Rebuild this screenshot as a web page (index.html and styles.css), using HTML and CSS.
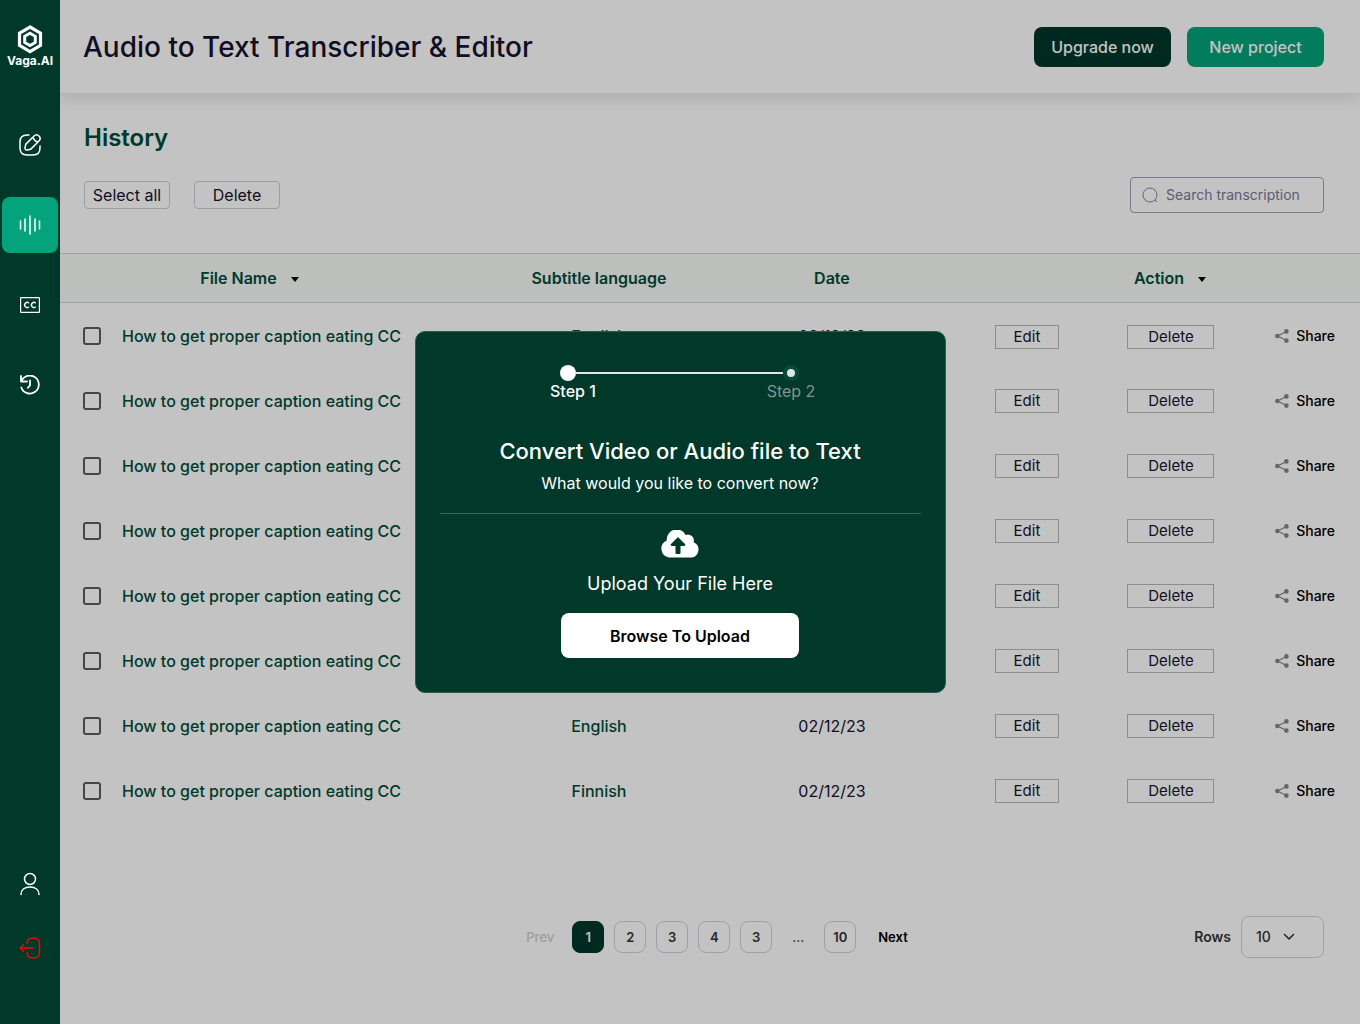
FILE: index.html
```html
<!DOCTYPE html>
<html lang="en">
<head>
<meta charset="utf-8">
<meta name="viewport" content="width=device-width, initial-scale=1">
<title>Vaga.AI – Audio to Text Transcriber &amp; Editor</title>
<link rel="stylesheet" href="styles.css">
</head>
<body>
<svg class="defs" aria-hidden="true">
  <symbol id="share" viewBox="0 0 14 14">
    <path d="M11.5 2.5 2.5 7l9 4.500" fill="none" stroke="currentColor" stroke-width="1.200"/>
    <circle cx="11.400" cy="2.400" r="2.300"/><circle cx="2.300" cy="7" r="2.200"/><circle cx="11.400" cy="11.600" r="2.300"/>
  </symbol>
</svg>
<div class="app">
  <aside class="sidebar">
    <a class="logo" href="#">
      <svg width="26" height="29" viewBox="0 0 26 29" fill="none" stroke="#fff" aria-hidden="true">
        <path d="M13 2 23.500 8.200v12.200L13 26.600 2.500 20.400V8.200z" stroke-width="3.200"/>
        <path d="M13 8.300 18.300 11.300v6.200L13 20.500l-5.300-3v-6.200z" stroke-width="3"/>
      </svg>
      <span>Vaga.AI</span>
    </a>
    <nav class="side-nav" aria-label="Main">
      <a class="side-link" href="#" aria-label="Edit">
        <svg width="24" height="24" viewBox="0 0 24 24" fill="none" stroke="#fff" stroke-width="1.500" stroke-linecap="round" stroke-linejoin="round">
          <path d="M11 2H9C4 2 2 4 2 9v6c0 5 2 7 7 7h6c5 0 7-2 7-7v-2"/>
          <path d="M16.040 3.020 8.160 10.900c-.3.300-.6.890-.66 1.320l-.43 3.010c-.16 1.090.61 1.850 1.700 1.700l3.010-.43c.42-.06 1.010-.36 1.320-.66l7.880-7.880c1.360-1.360 2-2.940 0-4.940s-3.580-1.360-4.940 0zM14.910 4.150a7.140 7.140 0 0 0 4.940 4.940"/>
        </svg>
      </a>
      <a class="side-link active" href="#" aria-label="Transcribe" aria-current="page">
        <svg width="22" height="20" viewBox="0 0 22 20" fill="none" stroke="#fff" stroke-width="1.500" stroke-linecap="round">
          <path d="M1.500 6v8M6 4v12M11 1v18M16 4v12M20.500 6v8"/>
        </svg>
      </a>
      <a class="side-link" href="#" aria-label="Captions">
        <svg width="20" height="16" viewBox="0 0 20 16" fill="none" stroke="#fff">
          <rect x=".6" y=".6" width="18.800" height="14.800" rx=".5" stroke-width="1.200"/>
          <path d="M8.900 6.200a2.500 2.500 0 1 0 0 3.600M15.700 6.200a2.500 2.500 0 1 0 0 3.600" stroke-width="1.400"/>
        </svg>
      </a>
      <a class="side-link" href="#" aria-label="History">
        <svg width="20" height="20" viewBox="0 0 20 20" fill="none" stroke="#fff" stroke-width="1.800" stroke-linecap="round" stroke-linejoin="round">
          <path d="M1 1v5.500h6M1.400 6.300A9 9 0 1 1 1.300 12.500M10 5.500v5L7.800 12.800"/>
        </svg>
      </a>
    </nav>
    <nav class="side-nav side-account" aria-label="Account">
      <a class="side-link" href="#" aria-label="Profile">
        <svg width="20" height="24" viewBox="0 0 20 24" fill="none" stroke="#fff" stroke-width="1.500" stroke-linecap="round">
          <circle cx="10" cy="7" r="5.500"/><path d="M1 22.500c0-4.500 3.500-7.500 9-7.500s9 3 9 7.500"/>
        </svg>
      </a>
      <a class="side-link" href="#" aria-label="Log out">
        <svg width="22" height="22" viewBox="0 0 22 22" fill="none" stroke="#f00" stroke-width="1.500" stroke-linecap="round" stroke-linejoin="round">
          <path d="M8 6.500C8.300 2.500 10 1 14 1h.5c4.500 0 6 1.500 6 6v8c0 4.500-1.500 6-6 6H14c-4 0-5.700-1.500-6-5.500M14 11H1.500M4.500 7.800 1.200 11l3.300 3.200"/>
        </svg>
      </a>
    </nav>
  </aside>

  <main class="main">
    <header class="topbar">
      <h1>Audio to Text Transcriber &amp; Editor</h1>
      <div class="topbar-actions">
        <button class="btn btn-dark" type="button">Upgrade now</button>
        <button class="btn btn-green" type="button">New project</button>
      </div>
    </header>

    <section class="history">
      <h2>History</h2>
      <div class="toolbar">
        <button class="btn-outline" type="button">Select all</button>
        <button class="btn-outline" type="button">Delete</button>
        <label class="search">
          <svg width="16" height="16" viewBox="0 0 16 16" fill="none" stroke="currentColor" aria-hidden="true"><circle cx="8" cy="8" r="7"/><path d="m13 13 2 2"/></svg>
          <input type="search" placeholder="Search transcription" aria-label="Search transcription">
        </label>
      </div>
    </section>

    <table class="files">
      <colgroup><col class="c-check"><col><col class="c-lang"><col class="c-date"><col class="c-edit"><col class="c-delete"><col class="c-share"></colgroup>
      <thead>
        <tr>
          <th class="h-name" colspan="2">File Name <span class="caret"></span></th>
          <th>Subtitle language</th>
          <th>Date</th>
          <th colspan="3">Action <span class="caret"></span></th>
        </tr>
      </thead>
      <tbody>
        <tr><td class="check"><input type="checkbox" aria-label="Select file 1"></td><td class="name">How to get proper caption eating CC</td><td class="lang">English</td><td>02/12/23</td><td><button class="edit" type="button">Edit</button></td><td><button class="delete" type="button">Delete</button></td><td class="share-cell"><button class="share" type="button"><svg width="14" height="14"><use href="#share"/></svg>Share</button></td></tr>
        <tr><td class="check"><input type="checkbox" aria-label="Select file 2"></td><td class="name">How to get proper caption eating CC</td><td class="lang">English</td><td>02/12/23</td><td><button class="edit" type="button">Edit</button></td><td><button class="delete" type="button">Delete</button></td><td class="share-cell"><button class="share" type="button"><svg width="14" height="14"><use href="#share"/></svg>Share</button></td></tr>
        <tr><td class="check"><input type="checkbox" aria-label="Select file 3"></td><td class="name">How to get proper caption eating CC</td><td class="lang">English</td><td>02/12/23</td><td><button class="edit" type="button">Edit</button></td><td><button class="delete" type="button">Delete</button></td><td class="share-cell"><button class="share" type="button"><svg width="14" height="14"><use href="#share"/></svg>Share</button></td></tr>
        <tr><td class="check"><input type="checkbox" aria-label="Select file 4"></td><td class="name">How to get proper caption eating CC</td><td class="lang">English</td><td>02/12/23</td><td><button class="edit" type="button">Edit</button></td><td><button class="delete" type="button">Delete</button></td><td class="share-cell"><button class="share" type="button"><svg width="14" height="14"><use href="#share"/></svg>Share</button></td></tr>
        <tr><td class="check"><input type="checkbox" aria-label="Select file 5"></td><td class="name">How to get proper caption eating CC</td><td class="lang">English</td><td>02/12/23</td><td><button class="edit" type="button">Edit</button></td><td><button class="delete" type="button">Delete</button></td><td class="share-cell"><button class="share" type="button"><svg width="14" height="14"><use href="#share"/></svg>Share</button></td></tr>
        <tr><td class="check"><input type="checkbox" aria-label="Select file 6"></td><td class="name">How to get proper caption eating CC</td><td class="lang">English</td><td>02/12/23</td><td><button class="edit" type="button">Edit</button></td><td><button class="delete" type="button">Delete</button></td><td class="share-cell"><button class="share" type="button"><svg width="14" height="14"><use href="#share"/></svg>Share</button></td></tr>
        <tr><td class="check"><input type="checkbox" aria-label="Select file 7"></td><td class="name">How to get proper caption eating CC</td><td class="lang">English</td><td>02/12/23</td><td><button class="edit" type="button">Edit</button></td><td><button class="delete" type="button">Delete</button></td><td class="share-cell"><button class="share" type="button"><svg width="14" height="14"><use href="#share"/></svg>Share</button></td></tr>
        <tr><td class="check"><input type="checkbox" aria-label="Select file 8"></td><td class="name">How to get proper caption eating CC</td><td class="lang">Finnish</td><td>02/12/23</td><td><button class="edit" type="button">Edit</button></td><td><button class="delete" type="button">Delete</button></td><td class="share-cell"><button class="share" type="button"><svg width="14" height="14"><use href="#share"/></svg>Share</button></td></tr>
      </tbody>
    </table>

    <footer class="table-footer">
      <nav class="pager" aria-label="Pages">
        <a class="prev" href="#">Prev</a>
        <div class="pages">
          <a class="page current" href="#" aria-current="page">1</a>
          <a class="page" href="#">2</a>
          <a class="page" href="#">3</a>
          <a class="page" href="#">4</a>
          <a class="page" href="#">3</a>
          <span class="dots">...</span>
          <a class="page" href="#">10</a>
        </div>
        <a class="next" href="#">Next</a>
      </nav>
      <div class="rows">
        <label for="rows">Rows</label>
        <div class="select">
          <select id="rows"><option>10</option><option>25</option><option>50</option></select>
          <svg width="12" height="8" viewBox="0 0 12 8" fill="none" stroke="currentColor" stroke-width="1.600" stroke-linecap="round" stroke-linejoin="round" aria-hidden="true"><path d="m1.500 1.500 4.500 4.500 4.500-4.500"/></svg>
        </div>
      </div>
    </footer>
  </main>
</div>

<div class="backdrop">
  <section class="dialog" role="dialog" aria-modal="true" aria-labelledby="dialog-title">
    <ol class="steps">
      <li class="step current"><span class="dot"></span>Step 1</li>
      <li class="line" role="presentation"></li>
      <li class="step upcoming"><span class="dot"></span>Step 2</li>
    </ol>
    <h2 id="dialog-title">Convert Video or Audio file to Text</h2>
    <p class="lead">What would you like to convert now?</p>
    <hr>
    <svg class="cloud" width="40" height="28" viewBox="0 0 40 28" aria-hidden="true">
      <path d="M33.600 12.200a6 6 0 0 0-8-7.300A10 10 0 0 0 6.700 9.800v.6A9 9 0 0 0 9 27.500h22.500a8 8 0 0 0 2.100-15.300z" fill="#fff"/>
      <path d="M17.500 7.500a.7.700 0 0 1 1 0l6.500 6.600c.7.700.3 1.800-.7 1.800h-3.800v7a1 1 0 0 1-1 1h-3a1 1 0 0 1-1-1v-7h-3.800c-1 0-1.400-1.100-.7-1.800z" fill="#003829"/>
    </svg>
    <p class="upload-label">Upload Your File Here</p>
    <button class="browse" type="button">Browse To Upload</button>
  </section>
</div>
</body>
</html>
```
FILE: styles.css
```css
* { box-sizing: border-box; }

body {
  margin: 0;
  font-family: Inter, "Liberation Sans", sans-serif;
  font-size: 16px;
  line-height: 24px;
  color: #17132e;
  background: #fff;
}

h1, h2, p { margin: 0; font-weight: 500; }
a { color: inherit; text-decoration: none; }
button, input, select { font: inherit; color: inherit; }
button { padding: 0; cursor: pointer; }
svg { display: block; flex: none; }
.defs { display: none; }

.app { display: flex; min-height: 100vh; }

/* Sidebar: stays bright above the dialog's backdrop */
.sidebar {
  position: relative;
  z-index: 2;
  display: flex;
  flex-direction: column;
  flex: none;
  width: 60px;
  padding: 25px 2px 48px;
  background: #003829;
}
.logo {
  display: flex;
  flex-direction: column;
  align-items: center;
  margin-bottom: 49px;
  font-size: 12px;
  font-weight: 700;
  line-height: 14px;
  color: #fff;
}
.side-nav { display: grid; gap: 24px; }
.side-account { gap: 8px; margin-top: auto; }
.side-link {
  display: grid;
  place-items: center;
  height: 56px;
  border-radius: 8px;
}
.side-link.active { background: #05a37b; }

.main { flex: 1; min-width: 0; }

/* Top bar */
.topbar {
  display: flex;
  align-items: center;
  justify-content: space-between;
  height: 94px;
  padding: 0 36px 0 23px;
  border-bottom: 1px solid #ebebee;
  box-shadow: 0 4px 16px rgba(0, 0, 0, 0.12);
}
.topbar h1 { font-size: 28px; font-weight: 500; line-height: 36px; }
.topbar-actions { display: flex; gap: 16px; }
.btn {
  width: 137px;
  height: 40px;
  border: 0;
  border-radius: 8px;
  font-weight: 500;
  color: #fff;
}
.btn-dark { background: #003829; }
.btn-green { background: #05a37b; }

/* History heading and tools */
.history { padding: 28px 36px 40px 24px; }
.history h2 {
  font-size: 24px;
  font-weight: 600;
  line-height: 32px;
  color: #004d38;
}
.toolbar { display: flex; align-items: center; gap: 24px; margin-top: 23px; }
.btn-outline {
  width: 86px;
  height: 28px;
  border: 1px solid #cfcddc;
  border-radius: 4px;
  background: none;
}
.search {
  display: flex;
  align-items: center;
  gap: 8px;
  width: 194px;
  height: 36px;
  margin-left: auto;
  padding: 0 4px 0 11px;
  border: 1px solid #a09eb8;
  border-radius: 4px;
  color: #84829f;
}
.search input {
  flex: 1;
  min-width: 0;
  padding: 0;
  border: 0;
  outline: 0;
  background: none;
  font-size: 14px;
}
.search input::placeholder { color: #7a7896; opacity: 1; }

/* File table */
.files { width: 100%; table-layout: fixed; border-collapse: collapse; }
.c-check { width: 62px; }
.c-lang { width: 170px; }
.c-date { width: 296px; }
.c-edit { width: 94px; }
.c-delete { width: 194px; }
.c-share { width: 92px; }
.files th {
  height: 49px;
  padding: 0;
  border: solid #d2d3df;
  border-width: 1px 0;
  background: #f7faf8;
  font-weight: 600;
  color: #004d38;
}
.files .h-name { padding-right: 75px; }
.caret {
  display: inline-block;
  margin-left: 10px;
  border: solid transparent;
  border-width: 5px 4px 0;
  border-top-color: #000;
  vertical-align: middle;
}
.files td { height: 65px; padding: 1px 0 0; text-align: center; }
.files .check { padding-left: 23px; text-align: left; }
.files .name { font-weight: 500; text-align: left; color: #004d38; }
.files .lang { font-weight: 500; color: #004d38; }
.check input {
  display: block;
  width: 18px;
  height: 18px;
  margin: 0;
  appearance: none;
  border: 2px solid #5c5c5c;
  border-radius: 3px;
}
.check input:checked { background: #05a37b; }
.edit, .delete {
  height: 24px;
  border: 1px solid #b8b8bb;
  background: none;
  font-size: 15px;
  line-height: 22px;
  vertical-align: middle;
}
.edit { width: 64px; }
.delete { width: 87px; }
.files .share-cell { padding-right: 25px; }
.share {
  display: flex;
  align-items: center;
  gap: 7px;
  margin-left: auto;
  border: 0;
  background: none;
  font-size: 14px;
  font-weight: 500;
  color: #000;
}
.share svg { fill: #858585; color: #858585; }

/* Pagination and page size */
.table-footer {
  display: grid;
  grid-template-columns: 1fr auto 1fr;
  align-items: center;
  padding: 93px 36px 60px 50px;
  font-size: 13px;
  font-weight: 500;
  color: #333;
}
.pager { display: flex; align-items: center; grid-column: 2; }
.pages { display: flex; gap: 10px; margin: 0 22px 0 18px; }
.page, .dots {
  display: grid;
  place-items: center;
  width: 32px;
  height: 32px;
}
.page { border: 1px solid #d2d1e0; border-radius: 8px; font-weight: 600; }
.page.current { border-color: #003829; background: #003829; color: #fff; }
.prev { color: #cfcfcf; }
.next { font-weight: 600; color: #000; }
.rows {
  display: flex;
  align-items: center;
  justify-self: end;
  gap: 10px;
  font-size: 14px;
  font-weight: 600;
}
.select {
  display: grid;
  grid-template-columns: 1fr 12px 28px;
  align-items: center;
  width: 83px;
  height: 42px;
  border: 1px solid #d2d1e0;
  border-radius: 8px;
}
.select select {
  grid-area: 1 / 1 / 2 / 4;
  width: 100%;
  height: 100%;
  padding: 0 14px;
  border: 0;
  appearance: none;
  background: none;
  font-weight: 500;
}
.select svg { grid-area: 1 / 2; pointer-events: none; }

/* Upload dialog */
.backdrop {
  position: fixed;
  inset: 0;
  z-index: 1;
  display: grid;
  place-items: center;
  background: rgba(0, 0, 0, 0.235);
}
.dialog {
  display: flex;
  flex-direction: column;
  align-items: center;
  width: 531px;
  max-width: 100%;
  padding: 33px 24px 34px;
  border: 1px solid #2c5d51;
  border-radius: 10px;
  background: #003829;
  color: #fff;
}
.steps {
  display: flex;
  margin: 0 0 0 6px;
  padding: 0;
  list-style: none;
}
.step {
  display: flex;
  flex-direction: column;
  align-items: center;
  width: 50px;
  line-height: 20px;
  white-space: nowrap;
}
.step .dot { width: 16px; height: 16px; border-radius: 50%; background: #fff; }
.step.current { align-items: flex-start; font-weight: 500; }
.step.current .dot { margin-left: 10px; }
.upcoming { color: #84938e; }
.step.upcoming .dot { border: 4px solid #004d38; background: #e3e4ea; }
.line { width: 208px; height: 2px; margin: 7px -17px 0 -25px; background: #e3e4ea; }
.dialog h2 { margin-top: 34px; font-size: 22px; font-weight: 500; line-height: 32px; }
.lead { margin-top: 4px; font-weight: 400; }
.dialog hr { width: 100%; height: 1px; margin: 18px 0 16px; border: 0; background: #35665a; }
.upload-label { margin-top: 12px; font-size: 18px; font-weight: 400; line-height: 28px; }
.browse {
  width: 238px;
  height: 45px;
  margin-top: 15px;
  border: 0;
  border-radius: 8px;
  background: #fff;
  font-weight: 600;
  color: #000;
}
```
